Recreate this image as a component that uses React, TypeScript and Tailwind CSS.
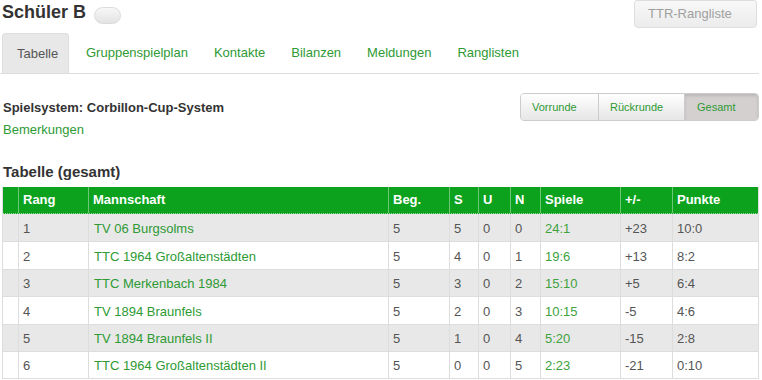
import React from 'react';

type Row = {
  rang: number;
  team: string;
  beg: number;
  s: number;
  u: number;
  n: number;
  spiele: string;
  diff: string;
  punkte: string;
};

const rows: Row[] = [
  { rang: 1, team: 'TV 06 Burgsolms', beg: 5, s: 5, u: 0, n: 0, spiele: '24:1', diff: '+23', punkte: '10:0' },
  { rang: 2, team: 'TTC 1964 Großaltenstädten', beg: 5, s: 4, u: 0, n: 1, spiele: '19:6', diff: '+13', punkte: '8:2' },
  { rang: 3, team: 'TTC Merkenbach 1984', beg: 5, s: 3, u: 0, n: 2, spiele: '15:10', diff: '+5', punkte: '6:4' },
  { rang: 4, team: 'TV 1894 Braunfels', beg: 5, s: 2, u: 0, n: 3, spiele: '10:15', diff: '-5', punkte: '4:6' },
  { rang: 5, team: 'TV 1894 Braunfels II', beg: 5, s: 1, u: 0, n: 4, spiele: '5:20', diff: '-15', punkte: '2:8' },
  { rang: 6, team: 'TTC 1964 Großaltenstädten II', beg: 5, s: 0, u: 0, n: 5, spiele: '2:23', diff: '-21', punkte: '0:10' },
];

const rowHeights = ['h-[27px]', 'h-[28px]', 'h-[27px]', 'h-[28px]', 'h-[27px]', 'h-[28px]'];

const gridCols = 'grid grid-cols-[15px_70px_300px_61px_29px_32px_30px_80px_52px_88px]';

const headers = ['', 'Rang', 'Mannschaft', 'Beg.', 'S', 'U', 'N', 'Spiele', '+/-', 'Punkte'];

const tabs = ['Gruppenspielplan', 'Kontakte', 'Bilanzen', 'Meldungen', 'Ranglisten'];

export default function App() {
  return (
    <div className="w-[762px] h-[380px] overflow-hidden bg-white text-[13px] text-[#333] font-['Liberation_Sans',Arial,sans-serif]">
      {/* title row */}
      <div className="flex justify-between h-[33px]">
        <div className="flex items-start pl-[2px] pt-[1px]">
          <h1 className="text-[18px] leading-[22px] font-bold text-[#333]">Schüler B</h1>
          <span className="ml-[8px] mt-[6px] w-[27px] h-[17px] rounded-full border border-[#dcdcdc] bg-linear-to-b from-[#f7f7f7] to-[#e3e3e3]" />
        </div>
        <button className="mr-[5px] w-[123px] h-[28px] rounded-b-[4px] rounded-t-[3px] border border-[#dedede] bg-linear-to-b from-[#f8f8f8] to-[#ececec] text-left pl-[13px] text-[13px] text-[#a0a0a0]">
          TTR-Rangliste
        </button>
      </div>

      {/* tabs */}
      <div className="flex h-[41px] mr-[3px] border-b border-[#dddddd]">
        <div className="ml-[2px] w-[67px] h-[40px] flex items-center pl-[14px] rounded-t-[4px] border border-b-0 border-[#dddddd] bg-[#e8e8e8] text-[#555]">
          Tabelle
        </div>
        <div className="flex ml-[4px]">
          {tabs.map((t) => (
            <div key={t} className="h-[40px] flex items-center px-[13px] text-[#2e9a34]">
              {t}
            </div>
          ))}
        </div>
      </div>

      {/* info row */}
      <div className="flex justify-between mt-[19px]">
        <div className="pl-[3px] pt-[6px]">
          <div className="font-bold leading-[18px] text-[#333]">Spielsystem: Corbillon-Cup-System</div>
          <div className="mt-[4px] leading-[18px] text-[#2e9a34]">Bemerkungen</div>
        </div>
        <div className="mr-[3px] flex h-[28px] rounded-[4px] border border-[#cccccc] overflow-hidden text-[11px] text-[#2e9a34]">
          <div className="w-[78px] pl-[11px] flex items-center bg-linear-to-b from-white to-[#e6e6e6] border-r border-[#cccccc]">
            Vorrunde
          </div>
          <div className="w-[86px] pl-[11px] flex items-center bg-linear-to-b from-white to-[#e6e6e6] border-r border-[#cccccc]">
            Rückrunde
          </div>
          <div className="w-[73px] pl-[12px] flex items-center bg-[#d4d0d0] shadow-[inset_0_2px_3px_rgba(0,0,0,0.12)]">
            Gesamt
          </div>
        </div>
      </div>

      <h2 className="mt-[23px] pl-[3px] text-[15px] leading-[20px] font-bold text-[#333]">Tabelle (gesamt)</h2>

      {/* table */}
      <div className="mt-[5px] ml-[2px] w-[757px] border-l border-r border-[#dddddd]">
        <div className={`${gridCols} h-[27px] bg-[#0ca21e] border-b border-dotted border-[#9ed6a5] font-bold text-white`}>
          {headers.map((h, i) => (
            <div
              key={i}
              className={`flex items-center pl-[4px] ${i > 0 ? 'border-l border-[#6cc877]' : ''}`}
            >
              {h}
            </div>
          ))}
        </div>
        {rows.map((r, idx) => (
          <div
            key={r.rang}
            className={`${gridCols} ${rowHeights[idx]} ${idx > 0 ? 'border-t border-[#dddddd]' : ''} ${idx === rows.length - 1 ? 'border-b border-[#dddddd]' : ''} ${idx % 2 === 0 ? 'bg-[#e8e8e8]' : 'bg-white'} text-[#555]`}
          >
            <div />
            <div className="flex items-center pl-[4px] pt-[2px] border-l border-[#dddddd]">{r.rang}</div>
            <div className="flex items-center pl-[5px] pt-[2px] border-l border-[#dddddd] text-[#2e9a34]">{r.team}</div>
            <div className="flex items-center pl-[4px] pt-[2px] border-l border-[#dddddd]">{r.beg}</div>
            <div className="flex items-center pl-[4px] pt-[2px] border-l border-[#dddddd]">{r.s}</div>
            <div className="flex items-center pl-[4px] pt-[2px] border-l border-[#dddddd]">{r.u}</div>
            <div className="flex items-center pl-[4px] pt-[2px] border-l border-[#dddddd]">{r.n}</div>
            <div className="flex items-center pl-[4px] pt-[2px] border-l border-[#dddddd] text-[#3ea23e]">{r.spiele}</div>
            <div className="flex items-center pl-[4px] pt-[2px] border-l border-[#dddddd]">{r.diff}</div>
            <div className="flex items-center pl-[4px] pt-[2px] border-l border-[#dddddd]">{r.punkte}</div>
          </div>
        ))}
      </div>
    </div>
  );
}
